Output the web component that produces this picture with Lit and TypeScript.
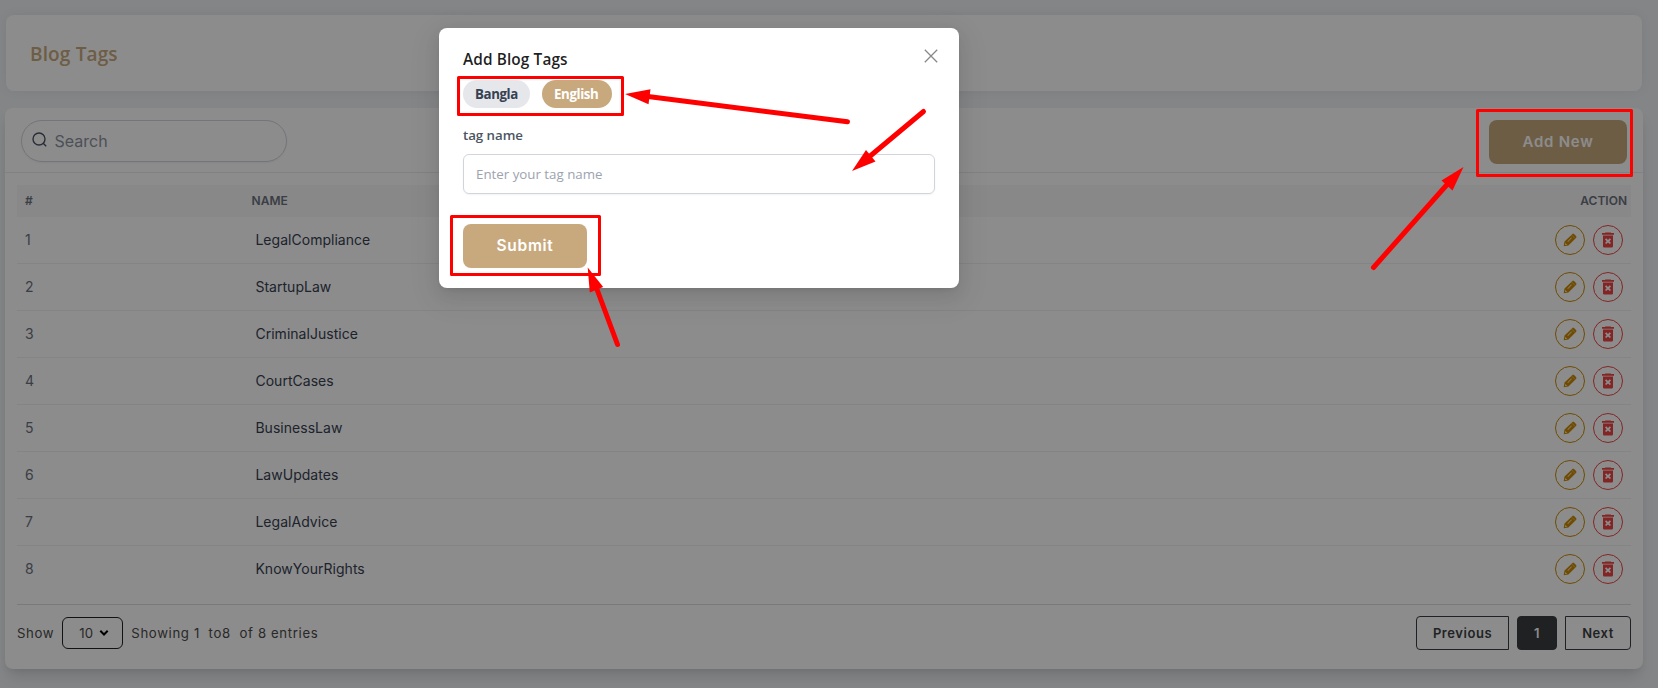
import { LitElement, html, css, svg } from "lit";
import { customElement } from "lit/decorators.js";

const TAGS = [
  "LegalCompliance",
  "StartupLaw",
  "CriminalJustice",
  "CourtCases",
  "BusinessLaw",
  "LawUpdates",
  "LegalAdvice",
  "KnowYourRights",
];

const pencil = html`<svg width="14" height="14" viewBox="0 0 14 14">
  <path fill="currentColor" fill-rule="evenodd" d="M9.200 1.300 1.500 8.600.700 13.300l4.700-.7 7.600-7.700c.6-.6.6-1.400 0-2L11.300 1.300c-.6-.6-1.500-.6-2.100 0ZM2.300 10.400l.7-.1.200.7.7.2-.1.600-1.300.200-.4-.4.200-1.200ZM8.400 4.600l.4.400-3.900 3.900-.4-.4 3.900-3.900Z"/>
  <path d="M8.800 2.200l3.200 3.200" stroke="#fff" stroke-width=".4"/>
</svg>`;

const trash = html`<svg width="12" height="16" viewBox="0 0 12 16">
  <path fill="currentColor" fill-rule="evenodd" d="M3.400.5h5.200l.5.600H12v1.700H0V1.100h2.900L3.400.5ZM1 3.600h10v10.300c0 .9-.6 1.600-1.500 1.600h-7C1.600 15.500 1 14.800 1 13.900V3.600Zm2 3.900L4.700 9.200 3 10.900 4.200 12.100 6 10.400l1.800 1.700L9 10.900 7.300 9.200 9 7.500 7.800 6.300 6 8 4.200 6.300 3 7.500Z"/>
</svg>`;

@customElement("tags-table")
class TagsTable extends LitElement {
  static styles = css`
    :host { display: block; padding: 12px 12px 11px; font-family: Inter, sans-serif; }
    .row { display: grid; grid-template-columns: 222px 1fr auto; align-items: center; height: 46px;
      padding: 0 8px; border-bottom: 1px solid #f0f0f0; color: #6b7280; font-size: 14px; }
    .row:last-child { border-bottom-color: transparent; }
    .text { padding-bottom: 2px; }
    .head { height: 32px; padding: 0 4px 0 8px; background: #f7f7f7; border: 0;
      font-size: 12px; font-weight: 600; color: #6b7280; }
    .name { padding-left: 8.4px; color: #374151; letter-spacing: .03px; }
    .head .name { padding-left: 4.500px; color: #6b7280; }
    .actions { display: flex; gap: 8px; }
    .btn { box-sizing: border-box; width: 30px; height: 30px; border-radius: 50%; border: 1px solid;
      display: grid; place-items: center; color: #ca8a04; }
    .btn.del { color: #ef4444; }
    svg { display: block; }
  `;
  render() {
    return html`
      <div class="row head"><span class="text">#</span><span class="text name">NAME</span><span class="text">ACTION</span></div>
      ${TAGS.map(
        (t, i) => html`<div class="row">
          <span class="text">${i + 1}</span><span class="text name">${t}</span>
          <span class="actions"><span class="btn">${pencil}</span><span class="btn del">${trash}</span></span>
        </div>`
      )}
    `;
  }
}

@customElement("tag-dialog")
class TagDialog extends LitElement {
  static styles = css`
    :host { display: block; box-sizing: border-box; width: 520px; height: 260px; padding: 20px 24px;
      background: #fff; border-radius: 8px; font-family: "Open Sans", sans-serif;
      box-shadow: 0 6px 16px rgba(0,0,0,.08), 0 3px 6px -4px rgba(0,0,0,.12), 0 9px 28px 8px rgba(0,0,0,.05); }
    .top { display: flex; justify-content: space-between; height: 32px; }
    .title { font-size: 15.4px; font-weight: 600; line-height: 24px; letter-spacing: .1px; color: rgba(0,0,0,.88); }
    .close { margin: 1px -3px 0 0; }
    .pills { display: flex; gap: 12px; }
    .pill { height: 28px; border-radius: 14px; background: #e5e7eb; color: #374151; padding: 0 12px;
      font-size: 13.3px; font-weight: 700; line-height: 28px; letter-spacing: -.4px; box-sizing: border-box; width: 67px; white-space: nowrap; }
    .pill.on { width: 70px; background: #c8a97e; color: #fff; }
    .label { margin-top: 17px; font-size: 13.3px; font-weight: 600; line-height: 20px; letter-spacing: -.05px; color: #4b5563; }
    .input { box-sizing: border-box; margin-top: 9px; height: 40px; border: 1px solid #d1d5db; border-radius: 6px;
      padding: 0 12px; line-height: 38px; font-size: 13.3px; color: #9ca3af; box-shadow: 0 1px 2px rgba(0,0,0,.05); }
    .submit { margin-top: 30px; width: 124px; height: 44px; border-radius: 8px; background: #c8a97e; color: #fff;
      font: 600 15.5px/44px Inter, sans-serif; letter-spacing: .7px; text-align: center; }
  `;
  render() {
    return html`
      <div class="top">
        <span class="title">Add Blog Tags</span>
        <svg class="close" width="14" height="14" viewBox="0 0 14 14"><path d="M.8.8l12.400 12.400M13.200.8L.8 13.200" stroke="#888" stroke-width="1.300"/></svg>
      </div>
      <div class="pills"><span class="pill">Bangla</span><span class="pill on">English</span></div>
      <div class="label">tag name</div>
      <div class="input">Enter your tag name</div>
      <div class="submit">Submit</div>
    `;
  }
}

const marks = svg`
  <g fill="none" stroke="#f00" stroke-width="3" stroke-linejoin="round">
    <rect x="458.500" y="77.500" width="164" height="37"/>
    <rect x="451.500" y="216.500" width="148" height="58"/>
    <rect x="1477.500" y="110.500" width="154" height="65"/>
  </g>
  <g stroke="#f00" stroke-width="5" stroke-linecap="round" fill="none">
    <path d="M847.500 121.700 648 96.500"/>
    <path d="M923.500 111.500 869 157"/>
    <path d="M617.500 344.500 596.500 288"/>
    <path d="M1373.500 267.500 1448 183.500"/>
  </g>
  <g fill="#f00">
    <path d="M625 94 650.500 89.300 648.500 104.300Z"/>
    <path d="M852 171 866 150 875.500 161.500Z"/>
    <path d="M587.700 267.500 603.200 287 589.800 292.500Z"/>
    <path d="M1463.500 167 1441.500 180.500 1452.500 190.500Z"/>
  </g>`;

@customElement("app-root")
class AppRoot extends LitElement {
  static styles = css`
    :host { display: block; position: relative; box-sizing: border-box; height: 688px; overflow: hidden;
      padding: 15px 15px 0 5px; background: #f0f2f5; }
    .hero { box-sizing: border-box; height: 76px; margin: 0 1px; padding-left: 24px; border-radius: 8px; background: #fff;
      box-shadow: 0 0 12px rgba(0,0,0,.06);
      font: 600 19px/78px "Open Sans", sans-serif; letter-spacing: .15px; color: #c8a97e; }
    .card { box-sizing: border-box; height: 561px; margin-top: 17px; border-radius: 8px; background: #fff;
      box-shadow: 0 10px 15px -3px rgba(0,0,0,.12), 0 4px 6px -2px rgba(0,0,0,.06); }
    .tools { display: flex; justify-content: space-between; box-sizing: border-box; height: 65px;
      padding: 12px 16px; border-bottom: 1px solid #ececec; font-family: Inter, sans-serif; }
    .search { display: flex; align-items: center; gap: 8px; box-sizing: border-box; width: 266px; height: 42px; padding: 0 9.500px;
      border: 1px solid #d1d5db; border-radius: 21px; font-size: 16px; color: #8b93a1; box-shadow: 0 1px 2px rgba(0,0,0,.05); }
    .search svg { margin-top: -3px; }
    .add { width: 138px; height: 44px; border-radius: 8px; background: #c8a97e; color: #fff;
      font-weight: 600; font-size: 15px; line-height: 44px; letter-spacing: .75px; text-align: center; }
    .foot { display: flex; align-items: center; justify-content: space-between; margin: 0 12px; padding-top: 11px;
      border-top: 1px solid #dedede; font: 400 13.2px/34px Inter, sans-serif; letter-spacing: .64px; color: #4b4b4b; }
    .info, .pager { display: flex; align-items: center; gap: 8px; }
    .info { white-space: pre; }
    .select { box-sizing: border-box; width: 61px; height: 32px; border: 1px solid #222; border-radius: 6px;
      padding-left: 16px; display: flex; align-items: center; gap: 6px; letter-spacing: .2px; }
    .page { box-sizing: border-box; height: 34px; border: 1px solid #3a3d42; text-align: center; line-height: 32px;
      font-weight: 600; font-size: 13px; letter-spacing: .55px; color: #3d3f43; }
    .prev { width: 93px; border-radius: 4px 0 0 4px; }
    .cur { width: 40px; border-radius: 4px; background: #3b3c3f; color: #fff; }
    .next { width: 66px; border-radius: 0 4px 4px 0; }
    .mask { position: absolute; inset: 0; background: rgba(0,0,0,.45); }
    tag-dialog { position: absolute; left: 439px; top: 28px; }
    .marks { position: absolute; left: 0; top: 0; }
  `;
  render() {
    return html`
      <div class="hero">Blog Tags</div>
      <div class="card">
        <div class="tools">
          <div class="search">
            <svg width="15" height="15" viewBox="0 0 15 15" fill="none" stroke="#4b5563" stroke-width="1.400"><circle cx="7" cy="7" r="6"/><path d="M11.200 11.200l3 3"/></svg>
            <span>Search</span>
          </div>
          <div class="add">Add New</div>
        </div>
        <tags-table></tags-table>
        <div class="foot">
          <div class="info"><span>Show</span><span class="select"><span>10</span><svg width="10" height="8" viewBox="0 0 10 8"><path d="M1.300 1.800 5 5.500 8.700 1.800" fill="none" stroke="#000" stroke-width="2"/></svg></span><span>Showing 1  to8  of 8 entries</span></div>
          <div class="pager"><span class="page prev">Previous</span><span class="page cur">1</span><span class="page next">Next</span></div>
        </div>
      </div>
      <div class="mask"></div>
      <tag-dialog></tag-dialog>
      <svg class="marks" width="1658" height="688" viewBox="0 0 1658 688">${marks}</svg>
    `;
  }
}
